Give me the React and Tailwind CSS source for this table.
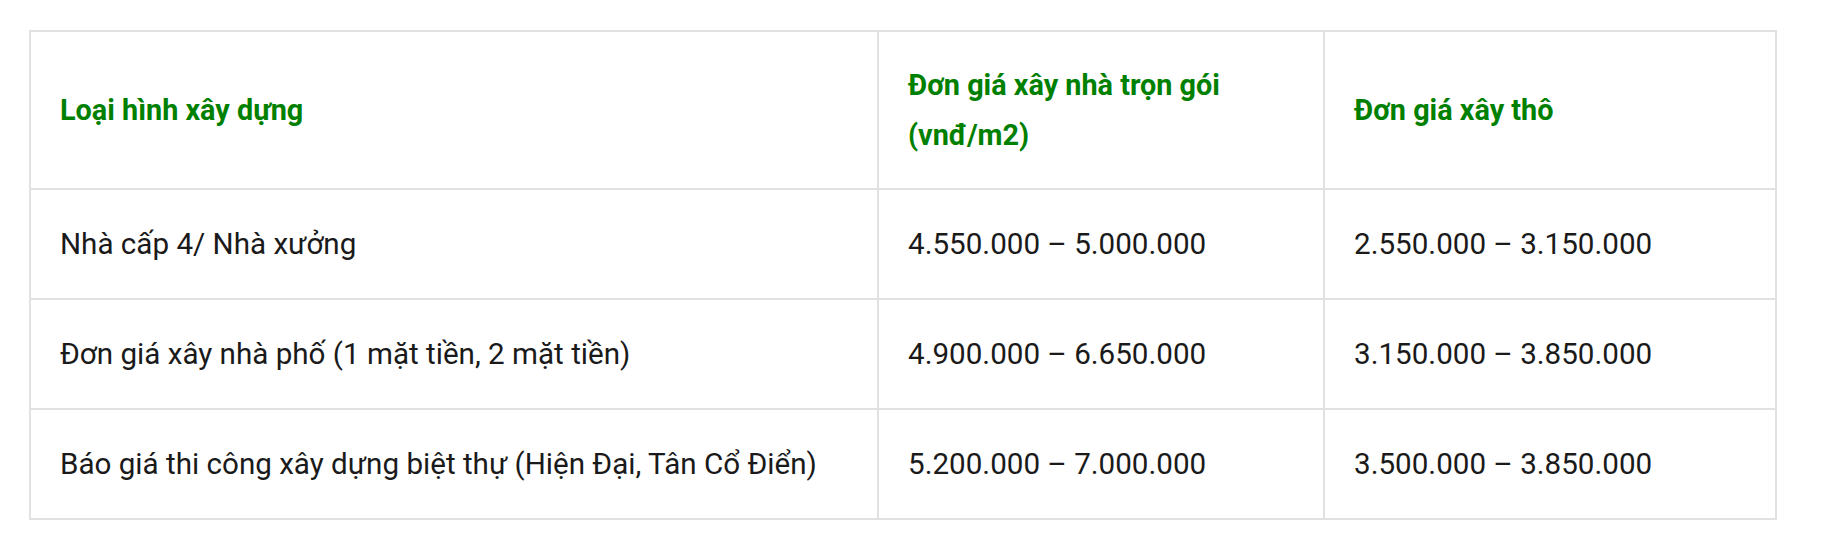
export default function App() {
  const rows = [
    ["Nhà cấp 4/ Nhà xưởng", "4.550.000 – 5.000.000", "2.550.000 – 3.150.000"],
    ["Đơn giá xây nhà phố (1 mặt tiền, 2 mặt tiền)", "4.900.000 – 6.650.000", "3.150.000 – 3.850.000"],
    ["Báo giá thi công xây dựng biệt thự (Hiện Đại, Tân Cổ Điển)", "5.200.000 – 7.000.000", "3.500.000 – 3.850.000"],
  ];
  const th = "border-2 border-[#e1e1e1] px-[29px] py-[28px] align-middle text-left font-bold text-[28.8px]";
  const td = "border-2 border-[#e1e1e1] px-[29px] py-[29px] align-middle text-left text-[29.6px]";
  return (
    <div className="w-[1822px] h-[550px] bg-white pl-[29px] pt-[30px] font-['Roboto',sans-serif] leading-[50px] text-[#1a1a1a]">
      <table className="border-collapse table-fixed w-[1746px]">
        <colgroup>
          <col className="w-[848px]" />
          <col className="w-[446px]" />
          <col className="w-[452px]" />
        </colgroup>
        <thead>
          <tr className="text-[#008000]">
            <th className={th}>Loại hình xây dựng</th>
            <th className={th}>Đơn giá xây nhà trọn gói (vnđ/m2)</th>
            <th className={th}>Đơn giá xây thô</th>
          </tr>
        </thead>
        <tbody>
          {rows.map((r, i) => (
            <tr key={i}>
              {r.map((c, j) => (
                <td key={j} className={td}>{c}</td>
              ))}
            </tr>
          ))}
        </tbody>
      </table>
    </div>
  );
}
